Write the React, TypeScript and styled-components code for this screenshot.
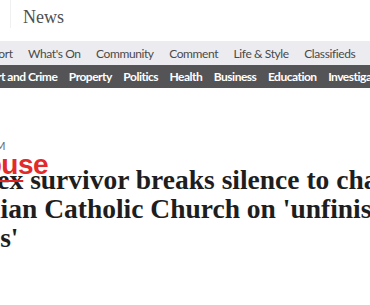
import React from 'react';
import styled, { createGlobalStyle } from 'styled-components';

const GlobalStyle = createGlobalStyle`
  html, body {
    margin: 0;
    padding: 0;
    background: #ffffff;
  }
  body {
    overflow: hidden;
  }
`;

const primaryLinks = ['Sport', "What's On", 'Community', 'Comment', 'Life & Style', 'Classifieds', 'Jobs'];
const sectionLinks = ['Court and Crime', 'Property', 'Politics', 'Health', 'Business', 'Education', 'Investigations'];

const App: React.FC = () => {
  return (
    <Page>
      <GlobalStyle />
      <Masthead>
        <Divider />
        <Brand>News</Brand>
      </Masthead>
      <PrimaryNav>
        <NavTrack $offset={-14} $gap={15.5}>
          {primaryLinks.map((l) => (
            <PrimaryLink key={l}>{l}</PrimaryLink>
          ))}
        </NavTrack>
      </PrimaryNav>
      <SectionNav>
        <NavTrack $offset={-23} $gap={11.5}>
          {sectionLinks.map((l) => (
            <SectionLink key={l}>{l}</SectionLink>
          ))}
        </NavTrack>
      </SectionNav>
      <Article>
        <Meta>11:42 AM</Meta>
        <Headline>
          <Line $offset={-18}>
            <Correction>
              <Struck>Sex</Struck>
              <Scrawl>Abuse</Scrawl>
            </Correction>{' '}
            survivor breaks silence to challenge
          </Line>
          <Line $offset={-88}>Australian Catholic Church on 'unfinished</Line>
          <Line $offset={-87}>business'</Line>
        </Headline>
      </Article>
    </Page>
  );
};

export default App;

const Page = styled.div`
  width: 370px;
  height: 305px;
  overflow: hidden;
  background: #ffffff;
`;

const Masthead = styled.header`
  height: 41px;
  display: flex;
  align-items: flex-start;
`;

const Divider = styled.div`
  width: 1px;
  height: 28px;
  margin-left: 10px;
  background: #f0f0f0;
`;

const Brand = styled.div`
  margin: 7px 0 0 12px;
  font-family: 'Liberation Serif', serif;
  font-size: 18px;
  line-height: 20px;
  color: #4f4f4f;
`;

const PrimaryNav = styled.nav`
  height: 24px;
  background: #ececf0;
  overflow: hidden;
`;

const SectionNav = styled.nav`
  height: 23px;
  background: #545456;
  overflow: hidden;
`;

const NavTrack = styled.ul<{ $offset: number; $gap: number }>`
  display: flex;
  align-items: center;
  height: 100%;
  margin: 0 0 0 ${(p) => p.$offset}px;
  padding: 0;
  list-style: none;
  gap: ${(p) => p.$gap}px;
  white-space: nowrap;
`;

const PrimaryLink = styled.li`
  font-family: Lato, 'Open Sans', sans-serif;
  font-size: 12px;
  letter-spacing: -0.4px;
  color: #4a4a4a;
`;

const SectionLink = styled.li`
  font-family: Lato, 'Open Sans', sans-serif;
  font-size: 12px;
  font-weight: 700;
  letter-spacing: -0.5px;
  color: #ffffff;
`;

const Article = styled.article`
  padding-top: 51px;
`;

const Meta = styled.div`
  margin-left: -45px;
  font-family: Lato, sans-serif;
  font-size: 11px;
  color: #666666;
  letter-spacing: 0.3px;
  text-transform: uppercase;
  line-height: 14px;
`;

const Headline = styled.h1`
  margin: 12px 0 0;
  font-family: 'Liberation Serif', serif;
  font-size: 27.5px;
  font-weight: 700;
  line-height: 29px;
  color: #1e1e1e;
  white-space: nowrap;
`;

const Line = styled.span<{ $offset: number }>`
  display: block;
  margin-left: ${(p) => p.$offset}px;
`;

const Correction = styled.span`
  position: relative;
  display: inline-block;
`;

const Struck = styled.span`
  text-decoration: line-through;
  text-decoration-color: #e02424;
  text-decoration-thickness: 2px;
`;

const Scrawl = styled.span`
  position: absolute;
  left: -17px;
  top: -14px;
  font-family: 'Liberation Sans', Arial, sans-serif;
  font-size: 28px;
  font-weight: 700;
  letter-spacing: -0.5px;
  color: #e22a2a;
  line-height: 1;
`;
